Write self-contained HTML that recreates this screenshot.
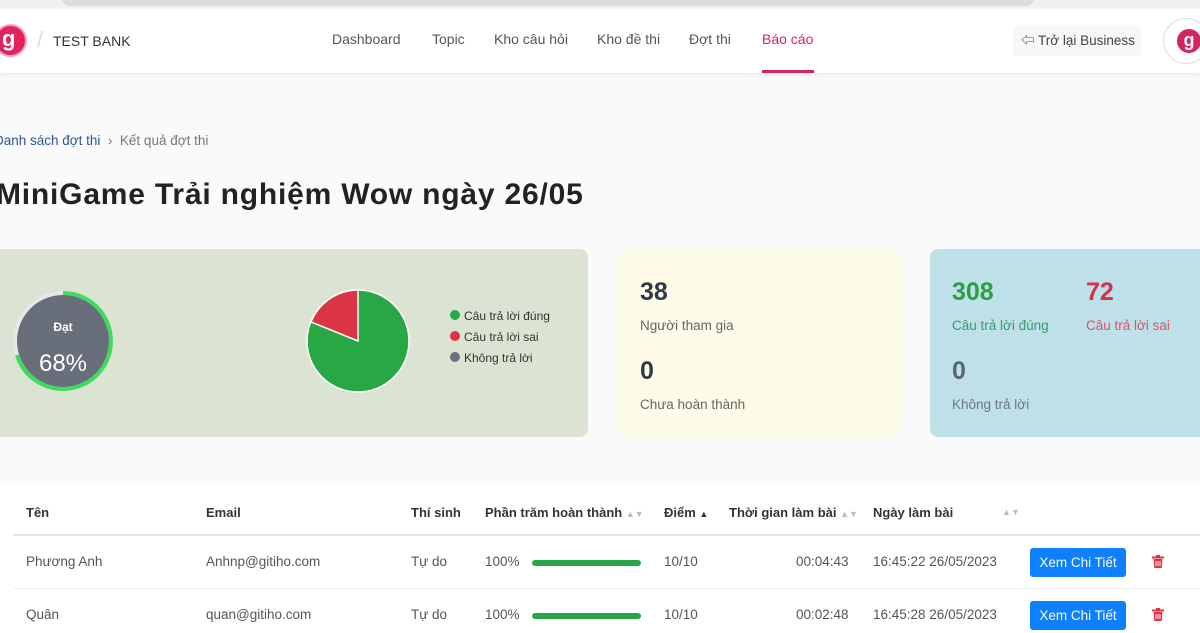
<!DOCTYPE html>
<html><head><meta charset="utf-8">
<style>
*{margin:0;padding:0;box-sizing:border-box}
body{width:1200px;height:630px;overflow:hidden;background:#fafafa;font-family:"Liberation Sans","Noto Sans CJK SC",sans-serif;color:#333;position:relative}
.a{position:absolute;white-space:nowrap}
.nav{font-size:14px;color:#555;top:31px}
.card{position:absolute;border-radius:8px}
.th{font-size:13px;font-weight:bold;color:#333;top:505px}
.td{font-size:13.5px;color:#555}
.btn{position:absolute;left:1030px;width:96px;height:29px;background:#0d7fff;color:#fff;font-size:13.5px;border-radius:3px;text-align:center;line-height:29px}
.bar{position:absolute;left:532px;width:109px;height:6px;border-radius:3px;background:#28a745}
.sort{color:#bbb;font-size:9px}
.num{font-size:25px;font-weight:bold}
</style></head><body>
<div class="a" style="left:0;top:0;width:1200px;height:9px;background:#f0f0f0"></div>
<div class="a" style="left:62px;top:-10px;width:972px;height:16px;background:#dcdcdc;border-radius:8px"></div>
<div class="a" style="left:0;top:9px;width:1200px;height:64px;background:#fff;box-shadow:0 2px 3px rgba(0,0,0,.06)"></div>
<div class="a" style="left:-6px;top:24px;width:33px;height:33px;border-radius:50%;background:#e0245e;border:2px solid #f7a3c0"></div>
<div class="a" style="left:2px;top:26px;color:#fff;font-weight:bold;font-size:22px;line-height:26px">g</div>
<div class="a" style="left:37px;top:27px;color:#ddd;font-size:22px">/</div>
<div class="a" style="left:53px;top:33px;font-size:14px;color:#333">TEST BANK</div>
<div class="a nav" style="left:332px">Dashboard</div>
<div class="a nav" style="left:432px">Topic</div>
<div class="a nav" style="left:494px">Kho câu hỏi</div>
<div class="a nav" style="left:597px">Kho đề thi</div>
<div class="a nav" style="left:689px">Đợt thi</div>
<div class="a nav" style="left:762px;color:#d6245f">Báo cáo</div>
<div class="a" style="left:762px;top:70px;width:52px;height:3px;background:#d6245f"></div>
<div class="a" style="left:1013px;top:26px;width:128px;height:30px;background:#f7f7f7;border-radius:3px;font-size:13.5px;color:#444;line-height:30px;padding-left:8px">⇦ Trở lại Business</div>
<div class="a" style="left:1163px;top:18px;width:46px;height:46px;border-radius:50%;border:1px solid #ddd;background:#fff"></div>
<div class="a" style="left:1177px;top:29px;width:24px;height:24px;border-radius:50%;background:#d6245f;color:#fff;font-weight:bold;text-align:center;line-height:22px;font-size:18px">g</div>
<div class="a" style="left:-6px;top:133px;font-size:13.5px;color:#2f5597">Danh sách đợt thi <span style="color:#777">&nbsp;›&nbsp; Kết quả đợt thi</span></div>
<div class="a" style="left:-4px;top:178px;font-size:30px;font-weight:bold;color:#222;letter-spacing:0.8px">MiniGame Trải nghiệm Wow ngày 26/05</div>

<div class="card" style="left:-10px;top:249px;width:598px;height:188px;background:#dbe4d2"></div>
<svg class="a" style="left:0;top:249px" width="588" height="188">
<circle cx="63" cy="92" r="48" fill="none" stroke="#e8e8e8" stroke-width="4"/>
<path d="M63 44 A48 48 0 1 1 17 106" fill="none" stroke="#3ddc5c" stroke-width="4"/>
<circle cx="63" cy="92" r="46" fill="#686e7a"/>
<text x="63" y="82" font-size="12" font-weight="bold" fill="#fff" text-anchor="middle" font-family="Liberation Sans">Đạt</text>
<text x="63" y="122" font-size="24" fill="#fff" text-anchor="middle" font-family="Liberation Sans">68%</text>
<circle cx="358" cy="92" r="51" fill="#28a745" stroke="#fff" stroke-width="1.5"/>
<path d="M358 92 L358 41 A51 51 0 0 0 311 73 Z" fill="#dc3545" stroke="#fff" stroke-width="1.5"/>
<circle cx="455" cy="66" r="5" fill="#28a745"/><text x="464" y="71" font-size="12" fill="#333" font-family="Liberation Sans">Câu trả lời đúng</text>
<circle cx="455" cy="87" r="5" fill="#dc3545"/><text x="464" y="92" font-size="12" fill="#333" font-family="Liberation Sans">Câu trả lời sai</text>
<circle cx="455" cy="108" r="5" fill="#6b717d"/><text x="464" y="113" font-size="12" fill="#333" font-family="Liberation Sans">Không trả lời</text>
</svg>

<div class="card" style="left:617px;top:249px;width:284px;height:188px;background:#fefbe8"></div>
<div class="a num" style="left:640px;top:278px;color:#2e3a4a">38</div>
<div class="a" style="left:640px;top:318px;font-size:13.5px;color:#666">Người tham gia</div>
<div class="a num" style="left:640px;top:357px;color:#2e3a4a">0</div>
<div class="a" style="left:640px;top:397px;font-size:13.5px;color:#666">Chưa hoàn thành</div>

<div class="card" style="left:930px;top:249px;width:290px;height:188px;background:#bee0e8"></div>
<div class="a num" style="left:952px;top:278px;color:#2aa043">308</div>
<div class="a" style="left:952px;top:318px;font-size:13.5px;color:#3b9a6a">Câu trả lời đúng</div>
<div class="a num" style="left:1086px;top:278px;color:#d9304a">72</div>
<div class="a" style="left:1086px;top:318px;font-size:13.5px;color:#d9546a">Câu trả lời sai</div>
<div class="a num" style="left:952px;top:357px;color:#5a6570">0</div>
<div class="a" style="left:952px;top:397px;font-size:13.5px;color:#6a7780">Không trả lời</div>

<div class="a" style="left:0;top:483px;width:1200px;height:150px;background:#fff"></div>
<div class="th a" style="left:26px">Tên</div>
<div class="th a" style="left:206px">Email</div>
<div class="th a" style="left:411px">Thí sinh</div>
<div class="th a" style="left:485px">Phần trăm hoàn thành <span class="sort">▲▼</span></div>
<div class="th a" style="left:664px">Điểm <span style="font-size:9px;color:#333">▲</span></div>
<div class="th a" style="left:729px">Thời gian làm bài <span class="sort">▲▼</span></div>
<div class="th a" style="left:873px">Ngày làm bài</div>
<div class="a sort" style="left:1002px;top:507px">▲▼</div>
<div class="a" style="left:13px;top:534px;width:1187px;height:2px;background:#e6e6e6"></div>
<div class="a" style="left:13px;top:588px;width:1187px;height:1px;background:#f0f0f0"></div>

<div class="a td" style="left:26px;top:554px">Phương Anh</div>
<div class="a td" style="left:206px;top:554px">Anhnp@gitiho.com</div>
<div class="a td" style="left:411px;top:554px">Tự do</div>
<div class="a td" style="left:485px;top:554px">100%</div>
<div class="bar" style="top:560px"></div>
<div class="a td" style="left:664px;top:554px">10/10</div>
<div class="a td" style="left:796px;top:554px">00:04:43</div>
<div class="a td" style="left:873px;top:554px">16:45:22 26/05/2023</div>
<div class="btn" style="top:548px">Xem Chi Tiết</div>
<svg class="a" style="left:1152px;top:555px" width="12" height="13" viewBox="0 0 12 13"><rect x="0" y="1.5" width="12" height="2" fill="#dc3545"/><rect x="4" y="0" width="4" height="2" fill="#dc3545"/><path d="M1.5 4h9l-.8 9h-7.4z" fill="#dc3545"/><path d="M4 6v5M6 6v5M8 6v5" stroke="#fff" stroke-width="0.9"/></svg>

<div class="a td" style="left:26px;top:607px">Quân</div>
<div class="a td" style="left:206px;top:607px">quan@gitiho.com</div>
<div class="a td" style="left:411px;top:607px">Tự do</div>
<div class="a td" style="left:485px;top:607px">100%</div>
<div class="bar" style="top:613px"></div>
<div class="a td" style="left:664px;top:607px">10/10</div>
<div class="a td" style="left:796px;top:607px">00:02:48</div>
<div class="a td" style="left:873px;top:607px">16:45:28 26/05/2023</div>
<div class="btn" style="top:601px">Xem Chi Tiết</div>
<svg class="a" style="left:1152px;top:608px" width="12" height="13" viewBox="0 0 12 13"><rect x="0" y="1.5" width="12" height="2" fill="#dc3545"/><rect x="4" y="0" width="4" height="2" fill="#dc3545"/><path d="M1.5 4h9l-.8 9h-7.4z" fill="#dc3545"/><path d="M4 6v5M6 6v5M8 6v5" stroke="#fff" stroke-width="0.9"/></svg>
</body></html>
